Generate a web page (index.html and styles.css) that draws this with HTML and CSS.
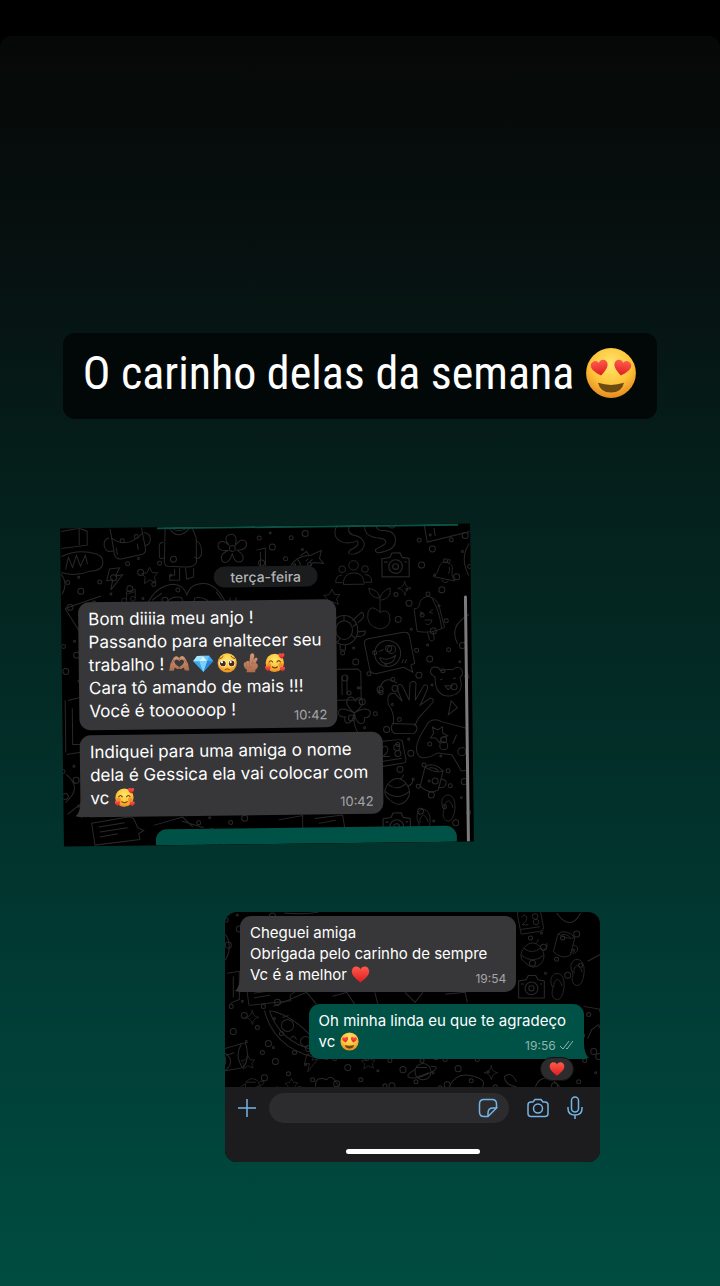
FILE: index.html
```
<!DOCTYPE html>
<html lang="pt-BR">
<head>
    <title>O carinho delas da semana</title>
    <meta charset="UTF-8">
    <meta name="viewport" content="width=device-width, initial-scale=1.0">
    <link rel="stylesheet" href="styles.css">
</head>
<body>
    <!-- Shared emoji and doodle shapes -->
    <svg class="sprite" width="0" height="0" aria-hidden="true">
        <defs>
            <radialGradient id="skin" cx="50%" cy="32%" r="68%">
                <stop offset="0" stop-color="#ffe66b"/>
                <stop offset="0.6" stop-color="#fdc33a"/>
                <stop offset="1" stop-color="#e78a1e"/>
            </radialGradient>
            <linearGradient id="red" x1="0" y1="0" x2="0" y2="1">
                <stop offset="0" stop-color="#ff5a4c"/>
                <stop offset="1" stop-color="#dd1d1f"/>
            </linearGradient>
            <linearGradient id="hand" x1="0" y1="0" x2="0" y2="1">
                <stop offset="0" stop-color="#d59a78"/>
                <stop offset="1" stop-color="#ac6b4b"/>
            </linearGradient>
        </defs>
        <symbol id="heart" viewBox="0 0 24 24">
            <path fill="url(#red)" d="M12 22C7 18 1 13.500 1 8.200C1 4.500 3.500 2 6.700 2C9 2 11 3.300 12 5.300C13 3.300 15 2 17.300 2C20.500 2 23 4.500 23 8.200C23 13.500 17 18 12 22Z"/>
        </symbol>
        <symbol id="heart-eyes" viewBox="0 0 48 48">
            <circle cx="24" cy="24" r="23" fill="url(#skin)"/>
            <use href="#heart" x="5" y="11" width="17" height="17" transform="rotate(-10 13 19)"/>
            <use href="#heart" x="26" y="11" width="17" height="17" transform="rotate(10 35 19)"/>
            <path fill="#6e4a12" d="M12 33Q24 37 36 33Q34 42 24 42Q14 42 12 33Z"/>
        </symbol>
        <symbol id="loved" viewBox="0 0 48 48">
            <circle cx="23" cy="25" r="21" fill="url(#skin)"/>
            <circle cx="10" cy="30" r="5" fill="#f4702a" opacity=".6"/>
            <circle cx="36" cy="30" r="5" fill="#f4702a" opacity=".6"/>
            <path fill="none" stroke="#693d10" stroke-width="2.600" stroke-linecap="round" d="M10 23Q14 17 18 23M28 23Q32 17 36 23M17 34Q23 39 29 34"/>
            <use href="#heart" x="31" y="2" width="15" height="15"/>
            <use href="#heart" x="0" y="31" width="14" height="14"/>
            <use href="#heart" x="34" y="33" width="13" height="13"/>
        </symbol>
        <symbol id="pleading" viewBox="0 0 48 48">
            <circle cx="24" cy="24" r="22" fill="url(#skin)"/>
            <circle cx="14" cy="25" r="8" fill="#fff"/>
            <circle cx="34" cy="25" r="8" fill="#fff"/>
            <circle cx="14" cy="25" r="6.500" fill="#4c2a10"/>
            <circle cx="34" cy="25" r="6.500" fill="#4c2a10"/>
            <circle cx="12" cy="22" r="2.500" fill="#fff"/>
            <circle cx="32" cy="22" r="2.500" fill="#fff"/>
            <path fill="none" stroke="#693d10" stroke-width="2" stroke-linecap="round" d="M7 14Q12 13 15 9M41 14Q36 13 33 9M19 39Q24 35 29 39"/>
        </symbol>
        <symbol id="gem" viewBox="0 0 48 48">
            <path fill="#3ba9ee" d="M10 7H38L47 19L24 44L1 19Z"/>
            <path fill="#a9e4ff" d="M10 7H24L15 19H1Z"/>
            <path fill="#d6f4ff" d="M24 7L33 19H15Z"/>
            <path fill="#6cc8fa" d="M24 7H38L33 19Z"/>
            <path fill="#2a86d6" d="M33 19H47L24 44Z"/>
            <path fill="#7dd2fb" d="M15 19H33L24 44Z"/>
        </symbol>
        <symbol id="heart-hands" viewBox="0 0 48 48">
            <path fill="url(#hand)" d="M1 40L4 24L11 11Q16 4 22 9L24 12L26 9Q32 4 37 11L44 24L47 40H37L34 33Q28 38 24 36Q20 38 14 33L11 40Z"/>
            <path fill="#39383a" d="M24 32Q12 25 13 18Q18 11 24 18Q30 11 35 18Q36 25 24 32Z"/>
            <path fill="none" stroke="#855039" stroke-width="1.500" d="M7 24L13 14M41 24L35 14M24 12V17M24 32V36"/>
        </symbol>
        <symbol id="finger-heart" viewBox="0 0 48 48">
            <path fill="url(#hand)" d="M13 46L14 40Q6 35 7 26Q8 22 12 23Q13 19 17 20L20 22L22 6Q24 1 29 3Q32 5 31 11L29 16L35 12Q40 13 38 18L34 24Q40 27 39 33Q38 38 33 41V46Z"/>
            <path fill="none" stroke="#a16447" stroke-width="1.400" d="M13 24V31M20 22V31M29 16L25 26Q29 28 34 24M11 33Q18 37 26 33"/>
        </symbol>

        <!-- Wallpaper doodles -->
        <symbol id="d-camera" viewBox="0 0 30 30"><path d="M3 9L10 8L12 4H19L21 8L27 9V25H3Z"/><circle cx="15" cy="16" r="6"/><circle cx="15" cy="16" r="2.500"/><path d="M5 12H8M23 12H25"/></symbol>
        <symbol id="d-bag" viewBox="0 0 50 36"><path d="M8 3L12 28Q13 34 20 33L39 29Q44 28 43 22L39 0M9 12Q25 24 41 7M7 12Q1 13 2 20Q3 27 11 25M42 7Q49 8 48 15Q47 20 43 20M15 29L14 22M36 24L35 18"/><circle cx="20" cy="15" r="2"/><circle cx="34" cy="11" r="2"/></symbol>
        <symbol id="d-robot" viewBox="0 0 44 56"><path d="M7 4Q17 -5 34 3L38 13V37Q36 43 26 42L9 41Q5 40 6 34ZM5 17Q0 17 1 24V32Q3 35 6 32M38 16Q44 18 43 30Q40 36 36 32M12 4Q20 16 32 3M16 44V50H11V55H21V43M27 43L28 54L35 52V43"/><path d="M15 4Q22 8 29 3"/></symbol>
        <symbol id="d-flower" viewBox="0 0 32 32"><path d="M13 12Q6 3 14 1Q22 0 19 12Q26 3 30 9Q32 16 21 17Q30 23 25 28Q18 31 16 20Q12 32 6 28Q2 21 12 17Q0 18 2 10Q6 5 13 12Z"/><circle cx="16" cy="15" r="3"/></symbol>
        <symbol id="d-bolt" viewBox="0 0 20 24"><path d="M5 2L15 1L11 9L18 8L6 23L8 13L2 14Z"/></symbol>
        <symbol id="d-star" viewBox="0 0 20 20"><path d="M10 1L13 7L19 7L15 12L17 18L10 15L4 19L5 12L1 8L7 7Z"/></symbol>
        <symbol id="d-spark" viewBox="0 0 20 20"><path d="M10 1Q10 9 18 10Q11 11 10 19Q9 11 1 10Q9 9 10 1Z"/></symbol>
        <symbol id="d-note" viewBox="0 0 20 20"><path d="M7 16V5L18 2V13M7 8L18 5"/><circle cx="4" cy="16" r="3"/><circle cx="15" cy="14" r="3"/></symbol>
        <symbol id="d-people" viewBox="0 0 40 28"><circle cx="20" cy="6" r="5"/><circle cx="8" cy="10" r="3.500"/><circle cx="32" cy="10" r="3.500"/><path d="M9 26Q9 14 20 14Q31 14 31 26ZM8 24H1Q1 16 8 16M32 24H39Q39 16 32 16"/></symbol>
        <symbol id="d-bell" viewBox="0 0 30 30"><path d="M3 20Q8 17 9 10Q12 3 18 5Q25 7 23 14Q22 21 26 25ZM17 5Q18 1 21 2Q22 4 19 6M12 23Q14 29 19 25M20 10Q21 14 19 17"/></symbol>
        <symbol id="d-fish" viewBox="0 0 36 24"><path d="M1 19Q6 6 22 6L33 1L31 9L35 14L25 13Q16 22 1 19ZM9 10Q14 14 10 19M12 6L18 2L21 6M17 12L20 9M21 13L24 10"/><circle cx="6" cy="15" r="1"/></symbol>
        <symbol id="d-snake" viewBox="0 0 66 36"><path d="M7 1Q-2 14 8 20Q15 24 25 20Q28 25 18 29Q13 34 22 33Q32 30 32 23Q31 16 21 14Q14 12 18 3M33 1Q30 15 44 17Q57 18 52 24L43 29Q43 34 52 31Q65 28 63 17Q61 9 49 10Q43 9 44 1M51 1Q62 14 65 1"/></symbol>
        <symbol id="d-sprout" viewBox="0 0 30 48"><path d="M15 28Q5 18 2 28Q-1 42 14 46Q28 44 25 31Q22 24 15 28V13Q4 12 3 2Q14 4 15 13Q17 5 26 2Q28 13 16 15"/></symbol>
        <symbol id="d-turtle" viewBox="0 0 34 44"><ellipse cx="13" cy="24" rx="13" ry="14"/><ellipse cx="13" cy="24" rx="8" ry="9"/><path d="M21 15L30 7Q35 11 26 17M25 26L33 25Q34 31 25 30M14 38V43H9V38M6 13L3 7M13 15V10M21 21L25 18M20 29L24 32M9 32L6 36"/></symbol>
        <symbol id="d-popsicle" viewBox="0 0 36 50"><path d="M4 38L1 14Q7 14 7 8Q9 2 16 1Q26 3 28 13L33 34Q20 41 4 38ZM20 3Q28 16 30 35M15 39L17 47Q20 50 22 46L21 38M7 17L11 19L8 21M21 15L17 18L21 19M12 26H20Q18 33 13 30"/></symbol>
        <symbol id="d-chat" viewBox="0 0 52 46"><path d="M1 12Q0 8 5 7L40 1Q45 0 46 5L51 32L47 34L49 41L40 36L12 42Q7 42 6 38Z"/><circle cx="24" cy="22" r="13"/><circle cx="28" cy="18" r="4"/><path d="M15 20L20 18M16 26Q24 30 32 24Q30 33 22 32Q17 31 16 26M38 32L40 28M41 32L43 28"/></symbol>
        <symbol id="d-bear" viewBox="0 0 36 34"><path d="M6 11Q-1 7 3 2Q9 -1 12 5Q18 3 24 4Q29 -1 33 4Q35 9 31 12Q36 27 22 30Q6 32 6 11ZM11 14L14 13M24 13L27 12M16 20H23L19 24Z"/></symbol>
        <symbol id="d-clover" viewBox="0 0 34 38"><path d="M17 18Q6 9 11 3Q16 0 18 6Q21 0 25 5Q27 11 17 18Q29 11 33 17Q33 23 27 23Q28 29 23 29Q18 27 17 18Q15 29 9 28Q6 25 8 22Q0 22 1 16Q4 11 17 18M17 18Q15 29 20 37"/></symbol>
        <symbol id="d-hand" viewBox="0 0 50 54"><path d="M6 43Q7 31 1 24Q-1 11 8 13L15 21L10 8Q11 2 15 5L22 20L23 3Q27 -1 29 3L28 20L37 5Q42 4 40 10L33 25L43 18Q48 19 45 23L31 38L27 46M5 43L27 44Q32 47 27 53H7Q2 50 5 43Z"/></symbol>
        <symbol id="d-pad" viewBox="0 0 54 56"><path d="M3 37Q-2 29 11 10Q16 -1 28 5L53 12M3 37Q7 45 23 36L37 38Q42 46 46 54H54M18 10L23 13L28 10L28 16L33 19L27 21L25 26L21 21L16 21L19 16Z"/><circle cx="29" cy="29" r="4"/><circle cx="47" cy="35" r="4"/><path d="M42 18L38 27"/></symbol>
        <symbol id="d-mug" viewBox="0 0 30 32"><path d="M8 6Q16 0 26 10Q19 13 8 6L3 25Q12 34 21 29L26 10M24 18Q31 19 28 25Q26 28 21 26M12 7Q18 6 21 10"/></symbol>
        <symbol id="d-pot" viewBox="0 0 32 32"><path d="M7 8Q15 0 23 8Q31 18 24 26Q16 34 7 25Q-2 18 7 8ZM6 10Q15 17 24 9M18 5Q22 2 21 0M26 12Q32 9 30 4M3 17Q15 27 27 17"/></symbol>
        <symbol id="d-card" viewBox="0 0 30 28"><path d="M1 6Q0 3 4 2L22 0Q26 0 26 4L29 20Q29 24 25 24L5 27ZM5 9Q9 4 11 9Q12 12 6 17H13M5 22L25 19"/><circle cx="20" cy="8" r="3"/><circle cx="21" cy="14" r="3"/></symbol>
        <symbol id="d-flip" viewBox="0 0 20 32"><path d="M7 1Q15 -1 17 9Q18 15 16 22Q13 32 7 29Q2 25 5 17Q-1 6 7 1ZM10 7Q5 9 6 16M10 7Q14 9 15 15"/></symbol>
        <symbol id="d-note-card" viewBox="0 0 56 30"><path d="M2 7L40 1L44 3L48 12L54 15L49 18L50 24L5 29ZM9 11L35 7M10 16L38 12M10 21L28 18"/></symbol>
        <symbol id="d-planet" viewBox="0 0 32 24"><circle cx="16" cy="12" r="8"/><path d="M8 10Q-3 16 3 18Q12 20 27 11Q33 6 24 7M9 8H20M11 17L22 13"/></symbol>
        <symbol id="d-pizza" viewBox="0 0 70 54"><path d="M2 0Q13 43 65 49M7 0Q18 35 62 42M7 0Q35 5 62 42"/><circle cx="25" cy="15" r="6"/><circle cx="43" cy="31" r="5"/><path d="M28 28Q31 23 34 29M20 7L26 5"/></symbol>
        <symbol id="d-cup" viewBox="0 0 34 36"><path d="M2 8L29 0Q34 15 27 25L3 29M5 8Q14 18 5 28M25 2Q18 12 26 25M10 13L18 10"/></symbol>
        <symbol id="d-loaf" viewBox="0 0 44 26"><path d="M1 6Q18 -2 36 4Q44 7 42 15Q40 21 29 21Q15 27 1 22M5 19L8 7L12 17L16 5L20 16L25 5L27 14"/></symbol>
        <symbol id="d-hands" viewBox="0 0 82 40"><path d="M1 23Q10 4 28 3Q38 4 41 14Q45 1 61 3Q73 6 81 25M18 24Q26 13 36 17Q38 30 41 34Q46 30 49 17Q61 15 67 27M6 19L16 12M70 11L76 19"/></symbol>
        <symbol id="d-dots" viewBox="0 0 60 50"><circle cx="5" cy="8" r="2"/><circle cx="16" cy="3" r="1"/><circle cx="18" cy="17" r="3"/><circle cx="37" cy="8" r="2"/><circle cx="51" cy="4" r="3"/><circle cx="48" cy="20" r="1"/><circle cx="31" cy="29" r="2"/><circle cx="7" cy="33" r="3"/><circle cx="55" cy="35" r="2"/><circle cx="20" cy="43" r="1"/><circle cx="42" cy="45" r="3"/></symbol>
    </svg>

    <div class="top-bar"></div>

    <main class="story">
        <h1 class="title">
            O carinho delas da semana
            <svg class="title-emoji" role="img" aria-label="Olhos de coração"><use href="#heart-eyes"/></svg>
        </h1>

        <section class="chat chat-tilted">
            <svg class="wallpaper" viewBox="0 0 410 318" preserveAspectRatio="xMidYMin slice" aria-hidden="true">
                <path d="M1 3L19 0L27 3V17L1 20M19 0V17M0 45Q8 55 1 66M4 80L40 68M4 80L18 103M6 172L30 166M4 226L30 222M3 172V224M10 180V216H30"/>
                <use href="#d-loaf" x="0" y="22" width="44" height="26"/>
                <use href="#d-bag" x="42" y="-2" width="50" height="36"/>
                <use href="#d-robot" x="98" y="-2" width="44" height="56"/>
                <use href="#d-flower" x="156" y="7" width="32" height="32"/>
                <use href="#d-bolt" x="44" y="39" width="20" height="24"/>
                <use href="#d-star" x="80" y="39" width="18" height="18"/>
                <use href="#d-note" x="60" y="60" width="16" height="16"/>
                <use href="#d-hands" x="85" y="54" width="82" height="40"/>
                <use href="#d-fish" x="228" y="24" width="36" height="24"/>
                <use href="#d-snake" x="260" y="-4" width="90" height="36"/>
                <use href="#d-people" x="274" y="34" width="38" height="28"/>
                <use href="#d-camera" x="318" y="24" width="34" height="34"/>
                <use href="#d-bell" x="370" y="33" width="28" height="30"/>
                <path d="M364 0L367 18L410 8M374 4L375 12M409 20Q399 34 408 52M196 24L205 22V45L196 48M200 26V46M169 71V88M175 71V88"/>
                <use href="#d-spark" x="336" y="56" width="16" height="16"/>
                <use href="#d-star" x="262" y="63" width="18" height="18"/>
                <use href="#d-sprout" x="305" y="60" width="28" height="48"/>
                <use href="#d-turtle" x="269" y="80" width="36" height="46"/>
                <use href="#d-popsicle" x="352" y="70" width="34" height="50"/>
                <use href="#d-chat" x="301" y="107" width="54" height="46"/>
                <use href="#d-bear" x="367" y="142" width="36" height="34"/>
                <path d="M275 144H296L299 147V175H275M280 151V170M285 151V170M408 91Q387 102 396 120M316 169Q321 148 335 159M389 177L386 191L395 184Z"/>
                <use href="#d-clover" x="275" y="170" width="34" height="38"/>
                <use href="#d-hand" x="325" y="156" width="50" height="54"/>
                <use href="#d-pad" x="352" y="193" width="54" height="56"/>
                <use href="#d-card" x="314" y="215" width="30" height="28"/>
                <use href="#d-mug" x="354" y="237" width="30" height="32"/>
                <use href="#d-pot" x="319" y="250" width="32" height="32"/>
                <use href="#d-camera" x="316" y="284" width="34" height="34"/>
                <use href="#d-flip" x="351" y="284" width="18" height="30"/>
                <use href="#d-flip" x="376" y="270" width="18" height="30"/>
                <use href="#d-note-card" x="26" y="288" width="56" height="30"/>
                <path d="M90 298L119 290L129 300M118 294L140 301M215 294L239 290V304M251 293L279 290L281 303M255 298L272 295M3 246Q20 260 2 274M4 286L18 275V290"/>
                <use href="#d-dots" x="62" y="28" width="60" height="50"/>
                <use href="#d-dots" x="2" y="46" width="60" height="50"/>
                <use href="#d-dots" x="-3" y="110" width="60" height="50"/>
                <use href="#d-dots" x="-5" y="235" width="60" height="50"/>
                <use href="#d-dots" x="194" y="4" width="60" height="50"/>
                <use href="#d-dots" x="354" y="8" width="60" height="50"/>
                <use href="#d-dots" x="330" y="62" width="60" height="50"/>
                <use href="#d-dots" x="276" y="120" width="60" height="50"/>
                <use href="#d-dots" x="350" y="118" width="60" height="50"/>
                <use href="#d-dots" x="282" y="160" width="60" height="50"/>
                <use href="#d-dots" x="330" y="212" width="60" height="50"/>
                <use href="#d-dots" x="350" y="254" width="60" height="50"/>
                <use href="#d-dots" x="130" y="288" width="60" height="50"/>
            </svg>
            <div class="peek peek-top"></div>
            <div class="scroll-thumb"></div>

            <div class="day">terça-feira</div>
            <div class="bubble received">
                <p>Bom diiiia meu anjo !<br>
                Passando para enaltecer seu<br>
                trabalho !
                <span class="emoji-row">
                    <svg class="emoji" role="img" aria-label="Mãos em coração"><use href="#heart-hands"/></svg>
                    <svg class="emoji" role="img" aria-label="Diamante"><use href="#gem"/></svg>
                    <svg class="emoji" role="img" aria-label="Carinha implorando"><use href="#pleading"/></svg>
                    <svg class="emoji" role="img" aria-label="Dedos em coração"><use href="#finger-heart"/></svg>
                    <svg class="emoji" role="img" aria-label="Sorriso com corações"><use href="#loved"/></svg>
                </span><br>
                Cara tô amando de mais !!!<br>
                Você é toooooop !</p>
                <time>10:42</time>
            </div>
            <div class="bubble received tail">
                <p>Indiquei para uma amiga o nome<br>
                dela é Gessica ela vai colocar com<br>
                vc <svg class="emoji" role="img" aria-label="Sorriso com corações"><use href="#loved"/></svg></p>
                <time>10:42</time>
            </div>
            <div class="peek peek-bottom"></div>
        </section>

        <section class="chat chat-reply">
            <svg class="wallpaper" viewBox="0 0 375 249" preserveAspectRatio="xMidYMin slice" aria-hidden="true">
                <use href="#d-card" x="291" y="-3" width="28" height="26"/>
                <use href="#d-mug" x="325" y="16" width="28" height="30"/>
                <use href="#d-pot" x="293" y="26" width="30" height="32"/>
                <use href="#d-camera" x="290" y="58" width="32" height="34"/>
                <use href="#d-flip" x="323" y="60" width="18" height="30"/>
                <use href="#d-flip" x="343" y="46" width="18" height="30"/>
                <use href="#d-cup" x="-8" y="130" width="34" height="36"/>
                <use href="#d-pizza" x="38" y="98" width="70" height="54"/>
                <use href="#d-note-card" x="20" y="66" width="52" height="28"/>
                <use href="#d-spark" x="20" y="96" width="16" height="18"/>
                <use href="#d-star" x="16" y="142" width="15" height="15"/>
                <use href="#d-bolt" x="78" y="140" width="17" height="20"/>
                <use href="#d-planet" x="14" y="162" width="28" height="22"/>
                <use href="#d-star" x="60" y="165" width="14" height="14"/>
                <use href="#d-planet" x="182" y="147" width="32" height="24"/>
                <use href="#d-star" x="136" y="142" width="15" height="15"/>
                <use href="#d-spark" x="258" y="152" width="16" height="16"/>
                <path d="M1 22Q9 34 1 48M3 61L15 59V87L6 91M9 64V85M0 140Q12 148 1 158M291 169Q286 158 279 164Q280 173 291 174M224 174Q231 158 250 164Q262 168 257 174M91 174Q90 163 102 167Q107 160 114 174M310 174Q315 161 328 168L334 174M362 49L375 42M358 94L375 97M362 126L366 117L373 112M331 1Q345 20 355 1M60 1Q80 3 94 0M49 94L82 80L92 92M108 84L122 80L130 92M150 80L153 92M180 80L190 90L198 80M220 82L240 80L242 90"/>
                <use href="#d-dots" x="-3" y="0" width="60" height="50"/>
                <use href="#d-dots" x="2" y="86" width="60" height="50"/>
                <use href="#d-dots" x="33" y="132" width="60" height="50"/>
                <use href="#d-dots" x="105" y="138" width="60" height="50"/>
                <use href="#d-dots" x="160" y="140" width="60" height="50"/>
                <use href="#d-dots" x="215" y="139" width="60" height="50"/>
                <use href="#d-dots" x="300" y="18" width="60" height="50"/>
                <use href="#d-dots" x="326" y="94" width="60" height="50"/>
                <use href="#d-dots" x="322" y="140" width="60" height="50"/>
            </svg>

            <div class="messages">
                <div class="bubble received tail roomy">
                    <p>Cheguei amiga<br>
                    Obrigada pelo carinho de sempre<br>
                    Vc é a melhor <svg class="emoji" role="img" aria-label="Coração"><use href="#heart"/></svg></p>
                    <time>19:54</time>
                </div>
                <div class="bubble sent tail">
                    <p>Oh minha linda eu que te agradeço<br>
                    vc <svg class="emoji" role="img" aria-label="Olhos de coração"><use href="#heart-eyes"/></svg></p>
                    <time>19:56
                        <svg class="ticks" viewBox="0 0 15 10" aria-hidden="true"><path d="M1 6L4 9L10 1M7 8L8 9L14 1"/></svg>
                    </time>
                    <span class="reaction"><svg role="img" aria-label="Coração"><use href="#heart"/></svg></span>
                </div>
            </div>

            <form class="composer">
                <button type="button" aria-label="Anexar">
                    <svg width="20" height="20" viewBox="0 0 20 20"><path d="M10 1V19M1 10H19"/></svg>
                </button>
                <div class="field">
                    <input type="text" aria-label="Mensagem">
                    <button type="button" aria-label="Figurinhas">
                        <svg width="20" height="20" viewBox="0 0 20 20"><path d="M18.500 10V6Q18.500 1.500 14 1.500H6Q1.500 1.500 1.500 6V14Q1.500 18.500 6 18.500H10L18.500 10H15Q10 10 10 15V18.500"/></svg>
                    </button>
                </div>
                <button type="button" class="camera" aria-label="Câmera">
                    <svg width="22" height="20" viewBox="0 0 22 20"><path d="M4 4H6L8 1.500H14L16 4H18Q21 4 21 7V15.500Q21 18.500 18 18.500H4Q1 18.500 1 15.500V7Q1 4 4 4Z"/><circle cx="11" cy="10.500" r="4.500"/></svg>
                </button>
                <button type="button" aria-label="Gravar áudio">
                    <svg width="16" height="24" viewBox="0 0 16 24"><rect x="4.500" y="1" width="7" height="15" rx="3.500"/><path d="M1 11V12.500Q1 19 8 19Q15 19 15 12.500V11M8 19V23"/></svg>
                </button>
            </form>
            <div class="home-bar"></div>
        </section>
    </main>
</body>
</html>
```
FILE: styles.css
```
* {
    box-sizing: border-box;
}

body {
    margin: 0;
    min-height: 100vh;
    display: flex;
    flex-direction: column;
    background: #000;
    color: #fff;
    font-family: Inter, Roboto, "Liberation Sans", sans-serif;
}

.sprite {
    position: absolute;
}

.top-bar {
    height: 36px;
    background: #000;
}

.story {
    flex: 1;
    display: flex;
    flex-direction: column;
    align-items: flex-start;
    padding: 297px 62px 120px;
    border-radius: 12px 12px 0 0;
    background: linear-gradient(#060807 0%, #061110 18%, #051f1b 35%, #02302a 60%, #00423a 85%, #004c41 100%);
}

.title {
    align-self: center;
    display: flex;
    align-items: center;
    gap: 11px;
    margin: 0 0 107px;
    padding: 0 20px 6px;
    min-height: 86px;
    border-radius: 12px;
    background: #020807;
    font-family: "Roboto Condensed", "Liberation Sans Narrow", Roboto, sans-serif;
    font-size: 46px;
    font-weight: 400;
    line-height: 64px;
    white-space: nowrap;
}

.title-emoji {
    width: 52px;
    height: 52px;
}

/* Chats */
.chat {
    position: relative;
    overflow: hidden;
    background: #000;
    isolation: isolate;
}

.chat-tilted {
    display: flex;
    flex-direction: column;
    align-items: flex-start;
    gap: 5px;
    width: 410px;
    max-width: 100%;
    padding: 40px 17px 0;
    margin-bottom: 68px;
    transform: rotate(-0.7deg);
    font-size: 17px;
    line-height: 23px;
}

.chat-reply {
    align-self: flex-end;
    width: 375px;
    max-width: 100%;
    margin-right: 58px;
    border-radius: 12px;
    font-size: 15px;
    line-height: 21px;
}

.wallpaper {
    position: absolute;
    inset: 0;
    z-index: -1;
    width: 100%;
    height: 100%;
    fill: none;
    stroke: #292929;
    stroke-width: 1;
}

.day {
    align-self: center;
    margin-bottom: 8px;
    padding: 0 17px;
    border-radius: 11px;
    background: #1b1c1d;
    color: #b4b4b6;
    font-size: 14px;
    font-weight: 500;
    line-height: 21px;
}

.bubble {
    position: relative;
    display: grid;
    padding: 6px 10px 7px;
    border-radius: 11px;
    white-space: nowrap;
}

.bubble p,
.bubble time {
    grid-area: 1 / 1;
    margin: 0;
}

.bubble p {
    padding-right: 5px;
}

.bubble time {
    place-self: end;
    color: #a5a5a9;
    font-size: 13px;
    line-height: 12px;
}

.chat-reply time {
    font-size: 12px;
}

.received {
    background: #373739;
}

.sent {
    background: #005246;
}

.roomy p {
    padding-right: 19px;
}

.sent p {
    padding-right: 8px;
}

.sent time {
    color: #8fb5ad;
}

.tail::before {
    content: "";
    position: absolute;
    bottom: 0;
    left: -5px;
    z-index: -1;
    width: 18px;
    height: 16px;
    background: inherit;
    clip-path: path("M5 0Q5 11 0 15Q6 17 18 16V0Z");
}

.sent.tail::before {
    left: auto;
    right: -5px;
    clip-path: path("M13 0Q13 11 18 15Q12 17 0 16V0Z");
}

.emoji {
    width: 21px;
    height: 21px;
    vertical-align: -4px;
}

.emoji-row {
    display: inline-flex;
    gap: 3px;
    vertical-align: -4px;
}

.chat-reply .emoji {
    width: 19px;
    height: 19px;
}

.ticks {
    width: 15px;
    height: 10px;
    fill: none;
    stroke: #8fb5ad;
    stroke-width: 1;
}

.reaction {
    position: absolute;
    right: 10px;
    bottom: -22px;
    display: flex;
    align-items: center;
    justify-content: center;
    width: 34px;
    height: 24px;
    border: 1px solid #111;
    border-radius: 12px;
    background: #2c2c2e;
}

.reaction svg {
    width: 16px;
    height: 16px;
}

/* Slices of the neighbouring messages */
.peek {
    background: #005246;
}

.peek-top {
    position: absolute;
    top: 0;
    left: 97px;
    right: 12px;
    height: 2px;
    background: #0b5146;
}

.peek-bottom {
    align-self: flex-end;
    width: 80%;
    height: 16px;
    margin-top: 8px;
    border-radius: 11px 11px 0 0;
}

.scroll-thumb {
    position: absolute;
    top: 72px;
    right: 4px;
    bottom: 0;
    width: 3px;
    border-radius: 2px 2px 0 0;
    background: #7b7b7d;
}

.messages {
    display: flex;
    flex-direction: column;
    align-items: flex-start;
    gap: 12px;
    padding: 4px 16px 28px 15px;
}

.messages .sent {
    align-self: flex-end;
}

/* Message box */
.composer {
    display: flex;
    align-items: center;
    gap: 12px;
    padding: 6px 17px 26px 12px;
    background: #1c1c1e;
}

.composer button {
    display: flex;
    padding: 0;
    border: 0;
    background: none;
    cursor: pointer;
}

.composer svg {
    fill: none;
    stroke: #74b4e4;
    stroke-width: 1.5;
}

.composer .camera {
    margin: 0 6px;
}

.field {
    flex: 1;
    display: flex;
    align-items: center;
    min-width: 0;
    height: 30px;
    padding: 0 11px 0 14px;
    border-radius: 15px;
    background: #2c2c2e;
}

.field input {
    flex: 1;
    min-width: 0;
    border: 0;
    outline: 0;
    background: none;
    color: #fff;
    font: inherit;
}

.home-bar {
    height: 13px;
    background: #1c1c1e;
}

.home-bar::before {
    content: "";
    display: block;
    width: 134px;
    height: 5px;
    margin: 0 auto;
    border-radius: 3px;
    background: #fff;
}
```
